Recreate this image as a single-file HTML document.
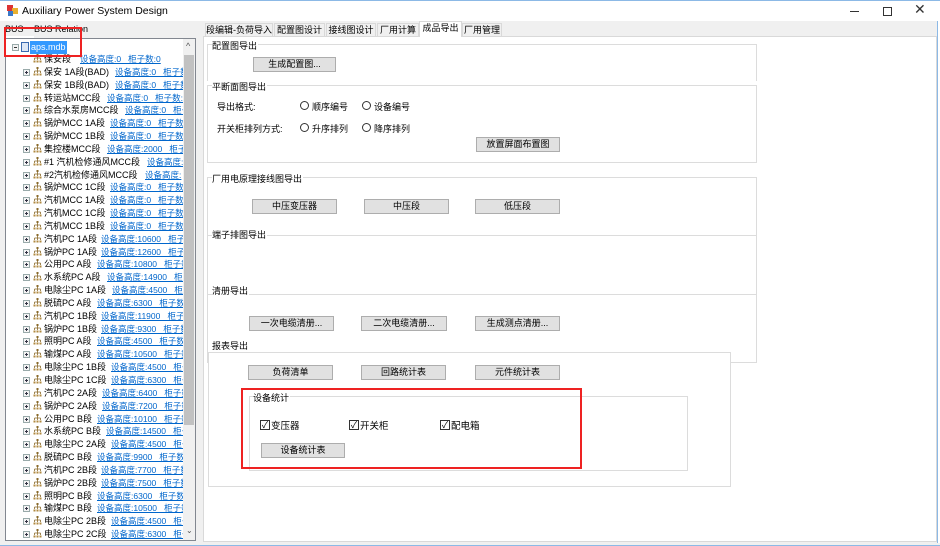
<!DOCTYPE html>
<html><head><meta charset="utf-8"><style>
*{margin:0;padding:0;box-sizing:border-box}
body{width:940px;height:546px;overflow:hidden;background:#f0f0f0;font-family:"Liberation Sans","Noto Sans CJK SC",sans-serif;font-size:9px;color:#000;position:relative}
.a{position:absolute;white-space:nowrap}
.tb{position:absolute;left:0;top:0;width:940px;height:21px;background:#fff;border-top:1px solid #8cb9e6}
.tree{position:absolute;left:5px;top:38px;width:191px;height:503px;background:#fff;border:1px solid #828790;overflow:hidden}
.row{position:absolute;height:13px;line-height:13px;font-size:9px;white-space:nowrap}
.pl{position:absolute;left:17px;top:3px;width:7px;height:7px;border:1px solid #9aa;background:#f4f4f4}
.pl:after{content:"";position:absolute;left:1px;top:2px;width:3px;height:1px;background:#334}
.pl:before{content:"";position:absolute;left:2px;top:1px;width:1px;height:3px;background:#334}
.ic{position:absolute;left:27px;top:1px;width:9px;height:9px}
.lk{position:absolute;color:#0066cc;text-decoration:underline;font-size:8.5px;white-space:pre}
.btn{position:absolute;height:15px;background:#e1e1e1;border:1px solid #adadad;text-align:center;line-height:13px;font-size:9px}
.gb{position:absolute;border:1px solid #dcdcdc;border-bottom:none}
.gt{position:absolute;background:#fff;font-size:9px;padding-right:1px}
.rd{position:absolute;width:9px;height:9px;border:1px solid #333;border-radius:50%;background:#fff}
.cb{position:absolute;width:10px;height:10px;border:1px solid #333;background:#fff;font-size:9px;line-height:8px;text-align:center}
.tab{position:absolute;top:23px;height:13px;line-height:12px;font-size:9px;border:1px solid #d9d9d9;border-bottom:none;background:#f0f0f0;text-align:center}
</style></head><body>
<div class="tb">
<div class="a" style="left:7px;top:4px;width:11px;height:11px;"><div style="position:absolute;left:0;top:0;width:6px;height:6px;background:#d33"></div><div style="position:absolute;left:5px;top:3px;width:6px;height:6px;background:#e8b030"></div><div style="position:absolute;left:1px;top:6px;width:5px;height:5px;background:#3a78c8"></div></div>
<div class="a" style="left:22px;top:4px;font-size:10.5px;color:#000">Auxiliary Power System Design</div>
<div class="a" style="left:850px;top:10px;width:9px;height:1px;background:#333"></div>
<div class="a" style="left:883px;top:6px;width:9px;height:9px;border:1px solid #333"></div>
<div class="a" style="left:914px;top:0px;font-size:14px;color:#333">✕</div>
</div>
<div class="a" style="left:5px;top:24px;font-size:9px">BUS</div>
<div class="a" style="left:34px;top:24px;font-size:9px">BUS Relation</div>
<div class="a" style="left:4px;top:36px;width:30px;height:2px;background:#fff"></div>
<div class="tree" id="tree">
<div class="a" style="left:177px;top:0;width:12px;height:501px;background:#f0f0f0"></div>
<div class="a" style="left:180px;top:2px;font-size:9px;color:#555">^</div>
<div class="a" style="left:178px;top:16px;width:10px;height:370px;background:#c1c1c1"></div>
<div class="a" style="left:180px;top:487px;font-size:8px;color:#555">⌄</div>
<div class="a" style="left:6px;top:5px;width:7px;height:7px;border:1px solid #9aa;background:#f4f4f4"></div>
<div class="a" style="left:8px;top:8px;width:3px;height:1px;background:#333"></div>
<div class="a" style="left:15px;top:3px;width:8px;height:10px;border:1px solid #3a6ab0;background:#dde7f5"></div>
<div class="a" style="left:24px;top:2px;height:13px;width:37px;background:#3399ff;color:#fff;font-size:9px;line-height:13px;padding-left:1px">aps.mdb</div>
</div>
<div class="a" style="left:4px;top:27px;width:78px;height:30px;border:2px solid #e22"></div>

<div class="a" style="left:203px;top:36px;width:734px;height:506px;background:#fff;border:1px solid #d9d9d9"></div>
<div class="tab" style="left:205px;width:68px">段编辑-负荷导入</div>
<div class="tab" style="left:274px;width:51px">配置图设计</div>
<div class="tab" style="left:326px;width:50px">接线图设计</div>
<div class="tab" style="left:377px;width:42px">厂用计算</div>
<div class="tab" style="left:419px;top:21px;height:16px;width:43px;background:#fff;z-index:2">成品导出</div>
<div class="tab" style="left:462px;width:40px">厂用管理</div>

<div class="gb" style="left:207px;top:44px;width:550px;height:37px"></div><div class="gt a" style="left:212px;top:39px">配置图导出</div>
<div class="btn" style="left:253px;top:57px;width:83px">生成配置图...</div>
<div class="gb" style="left:207px;top:85px;width:550px;height:78px;border-bottom:1px solid #dcdcdc"></div><div class="gt a" style="left:212px;top:80px">平断面图导出</div>
<div class="a" style="left:217px;top:100px">导出格式:</div>
<div class="a" style="left:217px;top:122px">开关柜排列方式:</div>
<div class="rd" style="left:300px;top:101px"></div><div class="a" style="left:312px;top:100px">顺序编号</div>
<div class="rd" style="left:362px;top:101px"></div><div class="a" style="left:374px;top:100px">设备编号</div>
<div class="rd" style="left:300px;top:123px"></div><div class="a" style="left:312px;top:122px">升序排列</div>
<div class="rd" style="left:362px;top:123px"></div><div class="a" style="left:374px;top:122px">降序排列</div>
<div class="btn" style="left:476px;top:137px;width:84px">放置屏面布置图</div>

<div class="gb" style="left:207px;top:177px;width:550px;height:60px"></div><div class="gt a" style="left:212px;top:172px">厂用电原理接线图导出</div>
<div class="btn" style="left:252px;top:199px;width:85px">中压变压器</div>
<div class="btn" style="left:364px;top:199px;width:85px">中压段</div>
<div class="btn" style="left:475px;top:199px;width:85px">低压段</div>
<div class="gb" style="left:207px;top:235px;width:550px;height:60px"></div><div class="gt a" style="left:212px;top:228px">端子排图导出</div>
<div class="gb" style="left:207px;top:294px;width:550px;height:69px;border-bottom:1px solid #dcdcdc"></div><div class="gt a" style="left:212px;top:284px">清册导出</div>
<div class="btn" style="left:249px;top:316px;width:85px">一次电缆清册...</div>
<div class="btn" style="left:361px;top:316px;width:86px">二次电缆清册...</div>
<div class="btn" style="left:475px;top:316px;width:85px">生成测点清册...</div>
<div class="gb" style="left:208px;top:352px;width:523px;height:135px;border-bottom:1px solid #dcdcdc;background:#fff"></div><div class="gt a" style="left:212px;top:339px">报表导出</div>
<div class="btn" style="left:248px;top:365px;width:85px">负荷清单</div>
<div class="btn" style="left:361px;top:365px;width:85px">回路统计表</div>
<div class="btn" style="left:475px;top:365px;width:85px">元件统计表</div>
<div class="gb" style="left:249px;top:396px;width:439px;height:75px;border-bottom:1px solid #dcdcdc"></div><div class="gt a" style="left:253px;top:391px">设备统计</div>
<div class="cb" style="left:260px;top:420px">✓</div><div class="a" style="left:271px;top:418px;font-size:9.5px">变压器</div>
<div class="cb" style="left:349px;top:420px">✓</div><div class="a" style="left:360px;top:418px;font-size:9.5px">开关柜</div>
<div class="cb" style="left:440px;top:420px">✓</div><div class="a" style="left:451px;top:418px;font-size:9.5px">配电箱</div>
<div class="btn" style="left:261px;top:443px;width:84px">设备统计表</div>
<div class="a" style="left:241px;top:388px;width:341px;height:81px;border:2px solid #e22"></div>
<div class="a" style="left:937px;top:21px;width:3px;height:525px;background:#fff;border-left:1px solid #8cb9e6"></div>
<div class="a" style="left:0;top:543px;width:940px;height:3px;background:#f0f0f0;border-bottom:1px solid #8cb9e6"></div>
<script>
var d=[["保安段",80,"0"],["保安 1A段(BAD)",115,"0"],["保安 1B段(BAD)",115,"0"],["转运站MCC段",107,"0"],["综合水泵房MCC段",125,"0"],["锅炉MCC 1A段",110,"0"],["锅炉MCC 1B段",110,"0"],["集控楼MCC段",107,"2000"],["#1 汽机检修通风MCC段",147,""],["#2汽机检修通风MCC段",145,""],["锅炉MCC 1C段",110,"0"],["汽机MCC 1A段",110,"0"],["汽机MCC 1C段",110,"0"],["汽机MCC 1B段",110,"0"],["汽机PC 1A段",101,"10600"],["锅炉PC 1A段",101,"12600"],["公用PC A段",97,"10800"],["水系统PC A段",107,"14900"],["电除尘PC 1A段",112,"4500"],["脱硫PC A段",97,"6300"],["汽机PC 1B段",101,"11900"],["锅炉PC 1B段",101,"9300"],["照明PC A段",97,"4500"],["输煤PC A段",97,"10500"],["电除尘PC 1B段",111,"4500"],["电除尘PC 1C段",111,"6300"],["汽机PC 2A段",102,"6400"],["锅炉PC 2A段",102,"7200"],["公用PC B段",97,"10100"],["水系统PC B段",106,"14500"],["电除尘PC 2A段",111,"4500"],["脱硫PC B段",97,"9900"],["汽机PC 2B段",101,"7700"],["锅炉PC 2B段",101,"7500"],["照明PC B段",97,"6300"],["输煤PC B段",97,"10500"],["电除尘PC 2B段",111,"4500"],["电除尘PC 2C段",111,"6300"]];
var t=document.getElementById('tree'),h='';
for(var i=0;i<d.length;i++){var y=14+i*12.84;var r=d[i];
var lt=r[2]===""?"设备高度:":"设备高度:"+r[2]+"   柜子数:0";
h+='<div class="row" style="left:0;top:'+y+'px;width:177px;overflow:hidden">'+(i==0?'':'<div class="pl"></div>')+
'<svg class="ic" viewBox="0 0 9 9"><rect x="3.5" y="0" width="2" height="2" fill="#8a6a2a"/><path d="M4.5 2v2M1.5 4h6M1.5 4v2M4.5 4v2M7.5 4v2" stroke="#8a6a2a" fill="none" stroke-width="0.8"/><rect x="0.5" y="6.5" width="2" height="2" fill="#b08a40"/><rect x="3.5" y="6.5" width="2" height="2" fill="#b08a40"/><rect x="6.5" y="6.5" width="2" height="2" fill="#b08a40"/></svg>'+
'<span class="a" style="left:38px;top:0">'+r[0]+'</span><span class="lk" style="left:'+(r[1]-6)+'px;top:0">'+lt+'</span></div>';}
t.insertAdjacentHTML('afterbegin',h);
</script>
</body></html>
